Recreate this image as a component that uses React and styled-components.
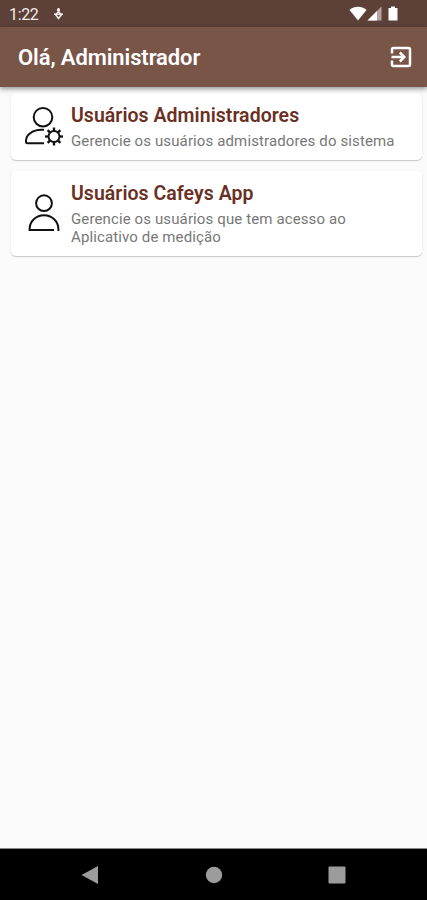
import React from 'react';
import styled, { createGlobalStyle, ThemeProvider } from 'styled-components';

const theme = {
  colors: {
    statusBar: '#5d4037',
    appBar: '#795548',
    background: '#fafafa',
    surface: '#ffffff',
    title: '#6b3024',
    text: '#777777',
    icon: '#111111',
    nav: '#9c9c9c',
  },
};

const GlobalStyle = createGlobalStyle`
  * {
    box-sizing: border-box;
  }

  body {
    margin: 0;
    font-family: Roboto, 'Liberation Sans', sans-serif;
  }
`;

// ─── Page Shell ──────────────────────────────────────────────────────────────

const Screen = styled.div`
  display: flex;
  flex-direction: column;
  width: 100%;
  height: 100vh;
  overflow: hidden;
  background: ${({ theme }) => theme.colors.background};
`;

const StatusBar = styled.div`
  display: flex;
  align-items: center;
  flex: 0 0 27px;
  padding: 0 29px 0 9px;
  color: #f3ebe8;
  background: ${({ theme }) => theme.colors.statusBar};
`;

const Clock = styled.span`
  width: 44px;
  padding-top: 2px;
  font-size: 16px;
  line-height: 20px;
  letter-spacing: -0.35px;
`;

const StatusIcons = styled.div`
  display: flex;
  align-items: center;
  margin-left: auto;
`;

const AppBar = styled.header`
  display: flex;
  align-items: center;
  justify-content: space-between;
  flex: 0 0 60px;
  padding: 0 14px 0 18px;
  color: #fff;
  background: ${({ theme }) => theme.colors.appBar};
  box-shadow: 0 2px 4px rgba(0, 0, 0, 0.3), 0 3px 6px rgba(0, 0, 0, 0.1);
  z-index: 1;
`;

const AppTitle = styled.h1`
  margin: 2px 0 0;
  font-size: 22px;
  font-weight: 600;
  line-height: 28px;
  letter-spacing: -0.1px;
  white-space: nowrap;
`;

const LogoutButton = styled.button`
  display: flex;
  padding: 0;
  border: 0;
  color: inherit;
  background: none;
`;

// ─── Menu cards ──────────────────────────────────────────────────────────────

const Menu = styled.main`
  display: flex;
  flex-direction: column;
  flex: 1;
  gap: 11px;
  padding: 6px 5px 0 11px;
`;

const Card = styled.section`
  display: flex;
  align-items: center;
  height: ${({ $height }) => $height}px;
  padding-left: 12px;
  border-radius: 5px;
  background: ${({ theme }) => theme.colors.surface};
  box-shadow: 0 1px 1px rgba(0, 0, 0, 0.17), 0 1px 3px rgba(0, 0, 0, 0.05);
`;

const CardIcon = styled.div`
  display: flex;
  flex: 0 0 48px;
  color: ${({ theme }) => theme.colors.icon};
`;

const CardTitle = styled.h2`
  margin: 1px 0 4px;
  font-size: 19.5px;
  font-weight: 600;
  line-height: 24px;
  letter-spacing: 0.04px;
  color: ${({ theme }) => theme.colors.title};
  white-space: nowrap;
`;

const CardText = styled.p`
  margin: 0;
  font-size: 15px;
  font-weight: 380;
  line-height: 18px;
  letter-spacing: 0.12px;
  color: ${({ theme }) => theme.colors.text};
  white-space: pre-line;
`;

// ─── Navigation bar ──────────────────────────────────────────────────────────

const NavBar = styled.nav`
  display: flex;
  align-items: center;
  justify-content: space-between;
  flex: 0 0 52px;
  padding: 0 81px;
  background: #000;
  border-top: 1px solid #888;
  color: ${({ theme }) => theme.colors.nav};
`;

// ─── Icons ───────────────────────────────────────────────────────────────────

const LocationDot = () => (
  <svg width="12" height="14" viewBox="0 0 12 14" fill="none" stroke="currentColor">
    <path d="M5.500 1v4M4 3h3" strokeWidth="1.900" />
    <path d="M1 7.200h9" strokeWidth="1.500" />
    <path d="M2.500 7.500 5.500 11.500 8.500 7.500 5.500 5z" strokeWidth="1.500" />
  </svg>
);

const Wifi = () => (
  <svg width="18" height="15" viewBox="0 0 18 15" fill="#fff">
    <path d="M0.500 4C5.500-.3 12.500-.3 17.500 4L9 14.500z" />
  </svg>
);

const Signal = () => (
  <svg width="15" height="15" viewBox="0 0 15 15">
    <path d="M0.500 14.500 14.500.5v14z" fill="#b5a49e" />
    <path d="M0.500 14.500 10 5v9.500z" fill="#fff" />
  </svg>
);

const Battery = styled.svg`
  margin-left: 6px;
`;

const LogoutIcon = () => (
  <svg width="24" height="24" viewBox="0 0 24 24" fill="none" stroke="currentColor" strokeWidth="2.500">
    <path d="M3 8.500V4.500Q3 3 4.500 3h15Q21 3 21 4.500v15Q21 21 19.500 21h-15Q3 21 3 19.500v-4" />
    <path d="M2.500 12h12M10.800 7.500l4.500 4.500-4.500 4.500" />
  </svg>
);

const TEETH = [0, 45, 90, 135, 180, 225, 270, 315];

const UserGearIcon = () => (
  <svg width="42" height="42" viewBox="0 0 42 42" fill="none" stroke="currentColor" strokeWidth="2">
    <circle cx="20" cy="11.200" r="9.300" />
    <path d="M21 23.800h-2.500C9 23.800 3 29.500 3 34.700V36Q3 37.300 4.500 37.300H21" />
    <circle cx="31" cy="30.500" r="5.500" />
    {TEETH.map((angle) => (
      <path key={angle} d="M31 25v-3.500" strokeWidth="2.300" transform={`rotate(${angle} 31 30.500)`} />
    ))}
  </svg>
);

const UserIcon = () => (
  <svg width="42" height="42" viewBox="0 0 42 42" fill="none" stroke="currentColor" strokeWidth="2">
    <circle cx="21" cy="10.200" r="7.900" />
    <path d="M35.400 38v-2a14.400 13.800 0 0 0-28.800 0v1H31" />
  </svg>
);

// ─── Component ───────────────────────────────────────────────────────────────

const ITEMS = [
  {
    icon: <UserGearIcon />,
    title: 'Usuários Administradores',
    text: 'Gerencie os usuários admistradores do sistema',
    height: 67,
  },
  {
    icon: <UserIcon />,
    title: 'Usuários Cafeys App',
    text: 'Gerencie os usuários que tem acesso ao\nAplicativo de medição',
    height: 85,
  },
];

const App = () => (
  <ThemeProvider theme={theme}>
    <GlobalStyle />
    <Screen>
      <StatusBar>
        <Clock>1:22</Clock>
        <LocationDot />
        <StatusIcons>
          <Wifi />
          <Signal />
          <Battery width="10" height="15" viewBox="0 0 10 15" fill="#fff">
            <path d="M3 0.500h4V2h2.500v12.500h-9V2H3z" />
          </Battery>
        </StatusIcons>
      </StatusBar>
      <AppBar>
        <AppTitle>Olá, Administrador</AppTitle>
        <LogoutButton aria-label="Sair">
          <LogoutIcon />
        </LogoutButton>
      </AppBar>
      <Menu>
        {ITEMS.map(({ icon, title, text, height }) => (
          <Card key={title} $height={height}>
            <CardIcon>{icon}</CardIcon>
            <div>
              <CardTitle>{title}</CardTitle>
              <CardText>{text}</CardText>
            </div>
          </Card>
        ))}
      </Menu>
      <NavBar>
        <svg width="18" height="20" viewBox="0 0 18 20" fill="currentColor">
          <path d="M0.500 10 17 1v18z" />
        </svg>
        <svg width="18" height="18" viewBox="0 0 18 18" fill="currentColor">
          <circle cx="9" cy="9" r="8.200" />
        </svg>
        <svg width="18" height="18" viewBox="0 0 18 18" fill="currentColor">
          <rect x="0.500" y="0.500" width="17" height="17" rx="1" />
        </svg>
      </NavBar>
    </Screen>
  </ThemeProvider>
);

export default App;
